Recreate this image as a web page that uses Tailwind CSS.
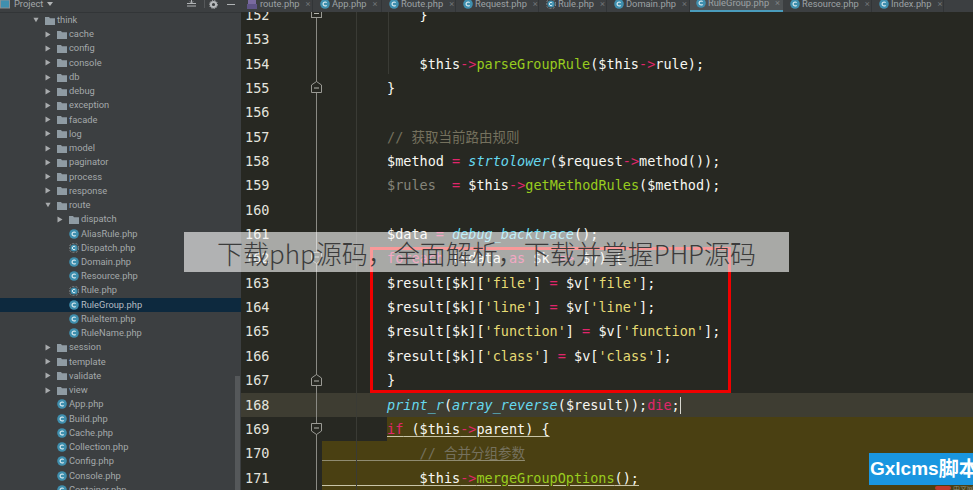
<!DOCTYPE html>
<html lang="zh">
<head>
<meta charset="utf-8">
<script src="https://cdn.jsdelivr.net/npm/@tailwindcss/browser@4"></script>
</head>
<body class="m-0 bg-[#272822]">
<svg width="0" height="0" class="absolute">
  <defs>
    <symbol id="folder" viewBox="0 0 10 9"><path d="M0 1h4l1 1.2h5V9H0z" fill="#8f9ba3"/></symbol>
    <symbol id="right" viewBox="0 0 6 7"><path d="M0.5 0.5L5.5 3.5L0.5 6.5z" fill="#a8abad"/></symbol>
    <symbol id="down" viewBox="0 0 7 6"><path d="M0.5 0.5H6.5L3.5 5.5z" fill="#a8abad"/></symbol>
    <symbol id="cls" viewBox="0 0 10 10"><circle cx="5" cy="5" r="4.8" fill="#3f8fae"/><path d="M6.6 3.7A2 2 0 1 0 6.6 6.3" fill="none" stroke="#dfeef3" stroke-width="1.1"/></symbol>
    <symbol id="abs" viewBox="0 0 10 10"><circle cx="5" cy="5" r="4.8" fill="none" stroke="#8a8f92" stroke-width="1" stroke-dasharray="2 1.4"/><circle cx="5" cy="5" r="3.6" fill="#3f8fae"/><path d="M6.3 3.9A1.7 1.7 0 1 0 6.3 6.1" fill="none" stroke="#dfeef3" stroke-width="1"/></symbol>
    <symbol id="foldup" viewBox="0 0 11 12"><path d="M5.5 0.5L10.5 4V11.5H0.5V4z" fill="#272822" stroke="#9a9a94"/><path d="M3 7H8" stroke="#b5b5ae"/></symbol>
    <symbol id="folddown" viewBox="0 0 11 12"><path d="M0.5 0.5H10.5V8L5.5 11.5L0.5 8z" fill="#272822" stroke="#9a9a94"/><path d="M3 5H8" stroke="#b5b5ae"/></symbol>
  </defs>
</svg>

<div class="relative flex w-[973px] h-[490px] overflow-hidden font-['Roboto','Noto_Sans',sans-serif]">

  <!-- project sidebar -->
  <aside class="relative w-[241px] h-full shrink-0 overflow-hidden bg-[#3c3f41] text-[9.3px] text-[#a4a9ab] leading-[14.24px]">
    <div class="h-[13px] overflow-hidden border-b border-[#323537]">
      <div class="flex items-center h-[8px] text-[#a4a9ab]">
        <svg class="shrink-0 w-[10px] h-[9px]" viewBox="0 0 10 9"><rect x="0.5" y="0" width="9" height="8" fill="#3f8fae" stroke="#8a8f92"/></svg>
        <span class="ml-[4px] w-[30px]">Project</span>
        <svg class="shrink-0 w-[6px] h-[4px] ml-[3px]" viewBox="0 0 6 4"><path d="M0 0H6L3 4z" fill="#b0b3b5"/></svg>
        <svg class="shrink-0 w-[9px] h-[8px] ml-[134px]" viewBox="0 0 9 8"><path d="M0 3.5H9M0 6H9M4.5 0V2.5M3 1.5L4.5 3L6 1.5" stroke="#b0b3b5" fill="none"/></svg>
        <div class="shrink-0 w-px h-[8px] ml-[8px] bg-[#55585a]"></div>
        <svg class="shrink-0 w-[9px] h-[9px] ml-[4px]" viewBox="0 0 9 9"><circle cx="4.5" cy="4.5" r="2.6" fill="none" stroke="#b8bbbd" stroke-width="2"/><circle cx="4.5" cy="4.5" r="4" fill="none" stroke="#b8bbbd" stroke-width="1" stroke-dasharray="1.2 1.2"/></svg>
        <div class="shrink-0 w-[8px] h-px ml-[9px] bg-[#b0b3b5]"></div>
      </div>
    </div>

    <ul>
      <li class="flex items-center h-[14.24px] pl-[33px]"><svg class="w-[6px] h-[6px] mr-[6px]"><use href="#down"/></svg><svg class="w-[10px] h-[9px] mr-[2px]"><use href="#folder"/></svg>think</li>
      <li class="flex items-center h-[14.24px] pl-[45px]"><svg class="w-[6px] h-[7px] mr-[6px]"><use href="#right"/></svg><svg class="w-[10px] h-[9px] mr-[2px]"><use href="#folder"/></svg>cache</li>
      <li class="flex items-center h-[14.24px] pl-[45px]"><svg class="w-[6px] h-[7px] mr-[6px]"><use href="#right"/></svg><svg class="w-[10px] h-[9px] mr-[2px]"><use href="#folder"/></svg>config</li>
      <li class="flex items-center h-[14.24px] pl-[45px]"><svg class="w-[6px] h-[7px] mr-[6px]"><use href="#right"/></svg><svg class="w-[10px] h-[9px] mr-[2px]"><use href="#folder"/></svg>console</li>
      <li class="flex items-center h-[14.24px] pl-[45px]"><svg class="w-[6px] h-[7px] mr-[6px]"><use href="#right"/></svg><svg class="w-[10px] h-[9px] mr-[2px]"><use href="#folder"/></svg>db</li>
      <li class="flex items-center h-[14.24px] pl-[45px]"><svg class="w-[6px] h-[7px] mr-[6px]"><use href="#right"/></svg><svg class="w-[10px] h-[9px] mr-[2px]"><use href="#folder"/></svg>debug</li>
      <li class="flex items-center h-[14.24px] pl-[45px]"><svg class="w-[6px] h-[7px] mr-[6px]"><use href="#right"/></svg><svg class="w-[10px] h-[9px] mr-[2px]"><use href="#folder"/></svg>exception</li>
      <li class="flex items-center h-[14.24px] pl-[45px]"><svg class="w-[6px] h-[7px] mr-[6px]"><use href="#right"/></svg><svg class="w-[10px] h-[9px] mr-[2px]"><use href="#folder"/></svg>facade</li>
      <li class="flex items-center h-[14.24px] pl-[45px]"><svg class="w-[6px] h-[7px] mr-[6px]"><use href="#right"/></svg><svg class="w-[10px] h-[9px] mr-[2px]"><use href="#folder"/></svg>log</li>
      <li class="flex items-center h-[14.24px] pl-[45px]"><svg class="w-[6px] h-[7px] mr-[6px]"><use href="#right"/></svg><svg class="w-[10px] h-[9px] mr-[2px]"><use href="#folder"/></svg>model</li>
      <li class="flex items-center h-[14.24px] pl-[45px]"><svg class="w-[6px] h-[7px] mr-[6px]"><use href="#right"/></svg><svg class="w-[10px] h-[9px] mr-[2px]"><use href="#folder"/></svg>paginator</li>
      <li class="flex items-center h-[14.24px] pl-[45px]"><svg class="w-[6px] h-[7px] mr-[6px]"><use href="#right"/></svg><svg class="w-[10px] h-[9px] mr-[2px]"><use href="#folder"/></svg>process</li>
      <li class="flex items-center h-[14.24px] pl-[45px]"><svg class="w-[6px] h-[7px] mr-[6px]"><use href="#right"/></svg><svg class="w-[10px] h-[9px] mr-[2px]"><use href="#folder"/></svg>response</li>
      <li class="flex items-center h-[14.24px] pl-[45px]"><svg class="w-[6px] h-[6px] mr-[6px]"><use href="#down"/></svg><svg class="w-[10px] h-[9px] mr-[2px]"><use href="#folder"/></svg>route</li>
      <li class="flex items-center h-[14.24px] pl-[57px]"><svg class="w-[6px] h-[7px] mr-[6px]"><use href="#right"/></svg><svg class="w-[10px] h-[9px] mr-[2px]"><use href="#folder"/></svg>dispatch</li>
      <li class="flex items-center h-[14.24px] pl-[69px]"><svg class="w-[10px] h-[10px] mr-[2px]"><use href="#cls"/></svg>AliasRule.php</li>
      <li class="flex items-center h-[14.24px] pl-[69px]"><svg class="w-[10px] h-[10px] mr-[2px]"><use href="#abs"/></svg>Dispatch.php</li>
      <li class="flex items-center h-[14.24px] pl-[69px]"><svg class="w-[10px] h-[10px] mr-[2px]"><use href="#cls"/></svg>Domain.php</li>
      <li class="flex items-center h-[14.24px] pl-[69px]"><svg class="w-[10px] h-[10px] mr-[2px]"><use href="#cls"/></svg>Resource.php</li>
      <li class="flex items-center h-[14.24px] pl-[69px]"><svg class="w-[10px] h-[10px] mr-[2px]"><use href="#abs"/></svg>Rule.php</li>
      <li class="flex items-center h-[14.24px] pl-[69px] bg-[#0d293e] text-[#b4bcc2]"><svg class="w-[10px] h-[10px] mr-[2px]"><use href="#cls"/></svg>RuleGroup.php</li>
      <li class="flex items-center h-[14.24px] pl-[69px]"><svg class="w-[10px] h-[10px] mr-[2px]"><use href="#cls"/></svg>RuleItem.php</li>
      <li class="flex items-center h-[14.24px] pl-[69px]"><svg class="w-[10px] h-[10px] mr-[2px]"><use href="#cls"/></svg>RuleName.php</li>
      <li class="flex items-center h-[14.24px] pl-[45px]"><svg class="w-[6px] h-[7px] mr-[6px]"><use href="#right"/></svg><svg class="w-[10px] h-[9px] mr-[2px]"><use href="#folder"/></svg>session</li>
      <li class="flex items-center h-[14.24px] pl-[45px]"><svg class="w-[6px] h-[7px] mr-[6px]"><use href="#right"/></svg><svg class="w-[10px] h-[9px] mr-[2px]"><use href="#folder"/></svg>template</li>
      <li class="flex items-center h-[14.24px] pl-[45px]"><svg class="w-[6px] h-[7px] mr-[6px]"><use href="#right"/></svg><svg class="w-[10px] h-[9px] mr-[2px]"><use href="#folder"/></svg>validate</li>
      <li class="flex items-center h-[14.24px] pl-[45px]"><svg class="w-[6px] h-[7px] mr-[6px]"><use href="#right"/></svg><svg class="w-[10px] h-[9px] mr-[2px]"><use href="#folder"/></svg>view</li>
      <li class="flex items-center h-[14.24px] pl-[57px]"><svg class="w-[10px] h-[10px] mr-[2px]"><use href="#cls"/></svg>App.php</li>
      <li class="flex items-center h-[14.24px] pl-[57px]"><svg class="w-[10px] h-[10px] mr-[2px]"><use href="#cls"/></svg>Build.php</li>
      <li class="flex items-center h-[14.24px] pl-[57px]"><svg class="w-[10px] h-[10px] mr-[2px]"><use href="#cls"/></svg>Cache.php</li>
      <li class="flex items-center h-[14.24px] pl-[57px]"><svg class="w-[10px] h-[10px] mr-[2px]"><use href="#cls"/></svg>Collection.php</li>
      <li class="flex items-center h-[14.24px] pl-[57px]"><svg class="w-[10px] h-[10px] mr-[2px]"><use href="#cls"/></svg>Config.php</li>
      <li class="flex items-center h-[14.24px] pl-[57px]"><svg class="w-[10px] h-[10px] mr-[2px]"><use href="#cls"/></svg>Console.php</li>
      <li class="flex items-center h-[14.24px] pl-[57px]"><svg class="w-[10px] h-[10px] mr-[2px]"><use href="#cls"/></svg>Container.php</li>
    </ul>
    <!-- tree scrollbar -->
    <div class="absolute right-px top-[376px] bottom-0 w-[5px] bg-[#55585a]"></div>
  </aside>

  <!-- editor column -->
  <main class="relative flex-1 min-w-0 h-full overflow-hidden">
    <!-- tabs -->
    <div class="relative z-20 h-3 overflow-hidden bg-[#3c3f41] text-[9.3px] text-[#9da2a5]">
      <div class="flex h-[16px] -mt-[4px] leading-[12px]">
        <div class="flex items-center shrink-0 w-[72px] h-[16px] pl-[6px] border-r border-[#323537]"><svg class="shrink-0 w-[10px] h-[9px] mr-[3px]" viewBox="0 0 10 9"><path d="M1 0h8v4H1z" fill="#7a6aa0"/><path d="M0 4h10v5H0z" fill="#5f5486"/></svg><span>route.php</span><span class="ml-[6px] text-[#6f7376]">×</span></div>
        <div class="flex items-center shrink-0 w-[69px] h-[16px] pl-[7px] border-r border-[#323537]"><svg class="shrink-0 w-[10px] h-[10px] mr-[2px]"><use href="#cls"/></svg><span>App.php</span><span class="ml-[6px] text-[#6f7376]">×</span></div>
        <div class="flex items-center shrink-0 w-[74px] h-[16px] pl-[7px] border-r border-[#323537]"><svg class="shrink-0 w-[10px] h-[10px] mr-[2px]"><use href="#cls"/></svg><span>Route.php</span><span class="ml-[6px] text-[#6f7376]">×</span></div>
        <div class="flex items-center shrink-0 w-[83px] h-[16px] pl-[7px] border-r border-[#323537]"><svg class="shrink-0 w-[10px] h-[10px] mr-[2px]"><use href="#cls"/></svg><span>Request.php</span><span class="ml-[6px] text-[#6f7376]">×</span></div>
        <div class="flex items-center shrink-0 w-[68px] h-[16px] pl-[7px] border-r border-[#323537]"><svg class="shrink-0 w-[10px] h-[10px] mr-[2px]"><use href="#abs"/></svg><span>Rule.php</span><span class="ml-[6px] text-[#6f7376]">×</span></div>
        <div class="flex items-center shrink-0 w-[83px] h-[16px] pl-[7px] border-r border-[#323537]"><svg class="shrink-0 w-[10px] h-[10px] mr-[2px]"><use href="#cls"/></svg><span>Domain.php</span><span class="ml-[6px] text-[#6f7376]">×</span></div>
        <div class="flex items-center shrink-0 w-[93px] h-[16px] pl-[6px] bg-[#4e5254] border-b-2 border-[#4a9cbc]"><svg class="shrink-0 w-[10px] h-[10px] mr-[2px]"><use href="#cls"/></svg><span>RuleGroup.php</span><span class="ml-[6px] text-[#7c8083]">×</span></div>
        <div class="flex items-center shrink-0 w-[89px] h-[16px] pl-[7px] border-r border-[#323537]"><svg class="shrink-0 w-[10px] h-[10px] mr-[2px]"><use href="#cls"/></svg><span>Resource.php</span><span class="ml-[6px] text-[#6f7376]">×</span></div>
        <div class="flex items-center shrink-0 w-[72px] h-[16px] pl-[7px] border-r border-[#323537]"><svg class="shrink-0 w-[10px] h-[10px] mr-[2px]"><use href="#cls"/></svg><span>Index.php</span><span class="ml-[6px] text-[#6f7376]">×</span></div>
      </div>
    </div>

    <!-- code -->
    <div class="-mt-[9.2px] bg-[#272822] font-['DejaVu_Sans_Mono','Noto_Sans_CJK_SC',monospace] text-[13.5px] leading-[24.37px] text-[#f8f8f2]">
      <div class="flex h-[24.37px]"><span class="w-[81px] pl-1 text-[#e4e4de]">152</span><span class="whitespace-pre">            }</span></div>
      <div class="flex h-[24.37px]"><span class="w-[81px] pl-1 text-[#e4e4de]">153</span></div>
      <div class="flex h-[24.37px]"><span class="w-[81px] pl-1 text-[#e4e4de]">154</span><span class="whitespace-pre">            $this<span class="text-[#e0266b]">-&gt;</span><span class="text-[#98cc1f]">parseGroupRule</span>($this<span class="text-[#e0266b]">-&gt;</span>rule);</span></div>
      <div class="flex h-[24.37px]"><span class="w-[81px] pl-1 text-[#e4e4de]">155</span><span class="whitespace-pre">        }</span></div>
      <div class="flex h-[24.37px]"><span class="w-[81px] pl-1 text-[#e4e4de]">156</span></div>
      <div class="flex h-[24.37px]"><span class="w-[81px] pl-1 text-[#e4e4de]">157</span><span class="whitespace-pre text-[#75715e]">        // 获取当前路由规则</span></div>
      <div class="flex h-[24.37px]"><span class="w-[81px] pl-1 text-[#e4e4de]">158</span><span class="whitespace-pre">        $method <span class="text-[#e0266b]">=</span> <span class="italic text-[#66d9ef]">strtolower</span>($request<span class="text-[#e0266b]">-&gt;</span>method());</span></div>
      <div class="flex h-[24.37px]"><span class="w-[81px] pl-1 text-[#e4e4de]">159</span><span class="whitespace-pre">        <span class="text-[#85857b]">$rules</span>  <span class="text-[#e0266b]">=</span> $this<span class="text-[#e0266b]">-&gt;</span><span class="text-[#98cc1f]">getMethodRules</span>($method);</span></div>
      <div class="flex h-[24.37px]"><span class="w-[81px] pl-1 text-[#e4e4de]">160</span></div>
      <div class="flex h-[24.37px]"><span class="w-[81px] pl-1 text-[#e4e4de]">161</span><span class="whitespace-pre">        $data <span class="text-[#e0266b]">=</span> <span class="italic text-[#66d9ef]">debug_backtrace</span>();</span></div>
      <div class="flex h-[24.37px]"><span class="w-[81px] pl-1 text-[#e4e4de]">162</span><span class="whitespace-pre">        <span class="text-[#e0266b]">foreach</span> ($data <span class="text-[#e0266b]">as</span> $k <span class="text-[#e0266b]">=&gt;</span> $v) {</span></div>
      <div class="flex h-[24.37px]"><span class="w-[81px] pl-1 text-[#e4e4de]">163</span><span class="whitespace-pre">        $result[$k][<span class="text-[#e6db74]">'file'</span>] <span class="text-[#e0266b]">=</span> $v[<span class="text-[#e6db74]">'file'</span>];</span></div>
      <div class="flex h-[24.37px]"><span class="w-[81px] pl-1 text-[#e4e4de]">164</span><span class="whitespace-pre">        $result[$k][<span class="text-[#e6db74]">'line'</span>] <span class="text-[#e0266b]">=</span> $v[<span class="text-[#e6db74]">'line'</span>];</span></div>
      <div class="flex h-[24.37px]"><span class="w-[81px] pl-1 text-[#e4e4de]">165</span><span class="whitespace-pre">        $result[$k][<span class="text-[#e6db74]">'function'</span>] <span class="text-[#e0266b]">=</span> $v[<span class="text-[#e6db74]">'function'</span>];</span></div>
      <div class="flex h-[24.37px]"><span class="w-[81px] pl-1 text-[#e4e4de]">166</span><span class="whitespace-pre">        $result[$k][<span class="text-[#e6db74]">'class'</span>] <span class="text-[#e0266b]">=</span> $v[<span class="text-[#e6db74]">'class'</span>];</span></div>
      <div class="flex h-[24.37px]"><span class="w-[81px] pl-1 text-[#e4e4de]">167</span><span class="whitespace-pre">        }</span></div>
      <div class="flex h-[24.37px] bg-[#3e3d32]"><span class="w-[81px] pl-1 text-[#e4e4de]">168</span><span class="whitespace-pre">        <span class="italic text-[#66d9ef]">print_r</span>(<span class="italic text-[#66d9ef]">array_reverse</span>($result));<span class="text-[#e0266b]">die</span>;<span class="inline-block w-px h-[17px] align-middle bg-[#d8d8d0]"></span></span></div>
      <div class="flex h-[24.37px]"><span class="w-[81px] pl-1 text-[#e4e4de]">169</span><span class="w-[65px]"></span><span class="flex-1 whitespace-pre bg-[#4a4012]"><span class="underline underline-offset-2 decoration-[#c9c5a8]"><span class="text-[#e0266b]">if</span> ($this<span class="text-[#e0266b]">-&gt;</span>parent) {</span></span></div>
      <div class="flex h-[24.37px]"><span class="w-[81px] pl-1 text-[#e4e4de]">170</span><span class="flex-1 whitespace-pre bg-[#4a4012]"><span class="text-[#75715e] underline underline-offset-2 decoration-[#8f8b70]">            // 合并分组参数</span></span></div>
      <div class="flex h-[24.37px]"><span class="w-[81px] pl-1 text-[#e4e4de]">171</span><span class="flex-1 whitespace-pre bg-[#4a4012]"><span class="underline underline-offset-2 decoration-[#c9c5a8]">            $this<span class="text-[#e0266b]">-&gt;</span><span class="text-[#98cc1f]">mergeGroupOptions</span>();</span></span></div>
    </div>

    <!-- fold gutter line, indent guides and fold markers sit over the code -->
    <div class="absolute z-10 left-[75px] top-3 bottom-0 w-px bg-[#8a8a84]"></div>
    <div class="absolute z-10 left-[115px] top-3 bottom-0 w-px bg-[#3a3b35]"></div>
    <div class="absolute z-10 left-[147px] top-3 h-[62px] w-px bg-[#3a3b35]"></div>
    <svg class="absolute z-10 left-[70px] top-[9px] w-[11px] h-[9px]" viewBox="0 0 11 9"><rect x="0.5" y="0.5" width="10" height="8" fill="#272822" stroke="#9a9a94"/><path d="M3 4.5H8" stroke="#b5b5ae"/></svg>
    <svg class="absolute z-10 left-[70px] top-[81px] w-[11px] h-[12px]"><use href="#foldup"/></svg>
    <svg class="absolute z-10 left-[70px] top-[252px] w-[11px] h-[12px]"><use href="#folddown"/></svg>
    <svg class="absolute z-10 left-[70px] top-[374px] w-[11px] h-[12px]"><use href="#foldup"/></svg>
    <svg class="absolute z-10 left-[70px] top-[423px] w-[11px] h-[12px]"><use href="#folddown"/></svg>
  </main>

  <!-- red annotation box -->
  <div class="absolute z-30 left-[370px] top-[247px] w-[361px] h-[146px] border-[3px] border-[#f00000]"></div>

  <!-- title banner -->
  <div class="absolute z-40 left-[184px] top-[232px] w-[605px] h-[40px] flex items-center justify-center bg-white/60 font-['Noto_Sans_CJK_SC','Noto_Sans',sans-serif] text-[26px] font-light text-[#3c3c3c]">下载php源码，全面解析，下载并掌握PHP源码</div>

  <!-- watermark -->
  <div class="absolute z-40 left-[869px] top-[453px] w-[104px] h-[32px] overflow-hidden flex items-center pl-px bg-[#1a96e0] font-['Liberation_Sans','Noto_Sans_CJK_SC',sans-serif] text-[19px] font-bold text-white whitespace-nowrap">Gxlcms<span class="text-[20px]">脚本</span></div>
  <div class="absolute z-40 left-[935px] top-[486px] flex items-center h-1 overflow-hidden font-['Noto_Sans_CJK_SC',sans-serif] text-[7px] text-[#8b8b7a] whitespace-nowrap"><span class="w-[16px] h-1 mr-[2px] rounded-full bg-[#c0392b]"></span>中文网</div>
</div>
</body>
</html>
